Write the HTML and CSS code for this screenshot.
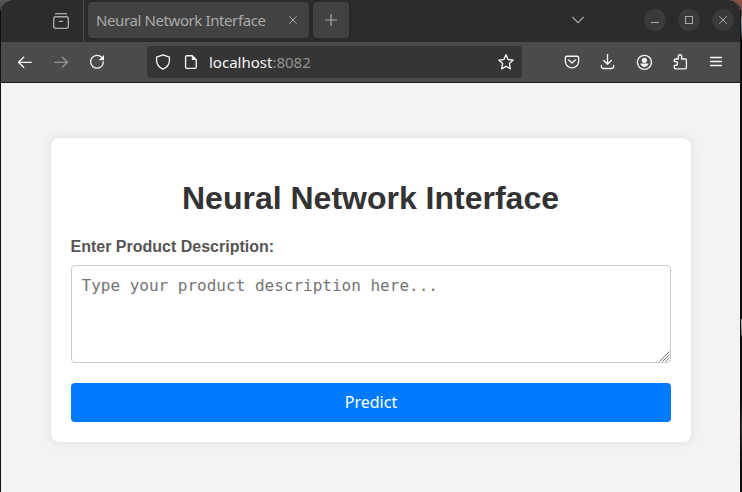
FILE: index.html
```html
<!DOCTYPE html>
<html lang="en">
<head>
<meta charset="utf-8">
<title>Neural Network Interface</title>
<link rel="stylesheet" href="styles.css">
</head>
<body>
<div class="window">
  <header class="titlebar">
    <div class="history"><svg class="icon" viewBox="0 0 16 16"><path d="M2.7 1Q3 .6 4 .6h8q1 0 1.3.4"/><rect x=".7" y="3.7" width="14.6" height="11.6" rx="2"/><path d="M6.2 8.3h3.6"/></svg></div>
    <div class="tab"><span class="tab-title">Neural Network Interface</span><svg class="tab-close" viewBox="0 0 8 8"><path d="M.3.3l7.4 7.4M7.7.3L.3 7.7"/></svg></div>
    <div class="new-tab"><svg viewBox="0 0 12 12"><path d="M6 0v12M0 6h12"/></svg></div>
    <svg class="chevron" viewBox="0 0 12 8"><path d="M.4 1L6 6.6 11.6 1"/></svg>
    <div class="controls">
      <span class="control"><svg viewBox="0 0 22 22"><path d="M7 13.5h8"/></svg></span>
      <span class="control"><svg viewBox="0 0 22 22"><rect x="7.5" y="7.5" width="7" height="7"/></svg></span>
      <span class="control"><svg viewBox="0 0 22 22"><path d="M7.2 7.2l7.6 7.6M14.8 7.2l-7.6 7.6"/></svg></span>
    </div>
  </header>
  <nav class="toolbar">
    <span class="tool"><svg class="icon" viewBox="0 0 16 16"><path d="M14.3 8.3H1.5M6.7 3.3L1.5 8.3l5.2 5"/></svg></span>
    <span class="tool disabled"><svg class="icon" viewBox="0 0 16 16"><path d="M1.7 8.3h12.8M9.3 3.3l5.2 5-5.2 5"/></svg></span>
    <span class="tool"><svg class="icon" viewBox="0 0 16 16"><path d="M12.8 3.5A6.4 6.4 0 1 0 14.4 8"/><path class="solid" d="M15 1v5.3H9.7z"/></svg></span>
    <div class="address">
      <svg class="icon" viewBox="0 0 16 16"><path d="M8 .8L14.4 3.1v3.4c0 3.7-2.5 7-6.4 8.7-3.9-1.7-6.4-5-6.4-8.7V3.1z"/></svg>
      <svg class="icon page-icon" viewBox="0 0 16 16"><path d="M3.8 1.7h5.4l4 4v7.4q0 1.2-1.2 1.2H3.8q-1.2 0-1.2-1.2V2.9q0-1.2 1.2-1.2z"/><path class="solid" d="M8.8 1.2V6h4.8z"/></svg>
      <span class="url">localhost<span class="port">:8082</span></span>
      <svg class="icon star" viewBox="0 0 16 16"><path d="M8 .8l2.1 4.7 5.1.6-3.8 3.5 1 5.2L8 12.3l-4.4 2.5 1-5.2L.8 6.1l5.1-.6z"/></svg>
    </div>
    <div class="actions">
      <span class="tool"><svg class="icon" viewBox="0 0 16 16"><path d="M3 2.2h10q1.6 0 1.6 1.6v3.8a6.6 6.2 0 0 1-13.2 0V3.8Q1.4 2.2 3 2.2zM4.7 6L8 9.1 11.3 6"/></svg></span>
      <span class="tool"><svg class="icon" viewBox="0 0 16 16"><path d="M7.5.3v10M3.7 6.5l3.8 3.8 3.8-3.8M1.4 11.5v1.3q0 1.7 1.7 1.7h8.8q1.7 0 1.7-1.7v-1.3"/></svg></span>
      <span class="tool"><svg class="icon" viewBox="0 0 16 16"><circle cx="8.4" cy="8.3" r="7"/><circle class="solid" cx="8.4" cy="6.3" r="2.6"/><path class="solid" d="M4.2 9.6h8.4Q11.4 13 8.4 13T4.2 9.6z"/></svg></span>
      <span class="tool"><svg class="icon" viewBox="0 0 16 16"><path d="M2.3 7.5V6q0-1 1-1h3V2.4a1.7 1.7 0 0 1 3.4 0V5h3.4q1.3 0 1.3 1.3v7.2q0 1.4-1.3 1.4H3.6q-1.3 0-1.3-1.4v-2.1h1.2a1.8 1.8 0 0 0 0-3.9H2.3z"/></svg></span>
      <span class="tool"><svg class="icon" viewBox="0 0 16 16"><path d="M2.5 3.5h11M2.5 7.5h11M2.5 11.5h11"/></svg></span>
    </div>
  </nav>
  <main class="page">
    <form class="card">
      <h1>Neural Network Interface</h1>
      <label for="description">Enter Product Description:</label>
      <div class="field">
        <textarea id="description" placeholder="Type your product description here..."></textarea>
        <svg class="grip" viewBox="0 0 11 11"><path d="M.5 10.5l10-10M3.5 10.5l7-7M6.5 10.5l4-4M9.5 10.5l1-1"/></svg>
      </div>
      <button type="button">Predict</button>
    </form>
  </main>
</div>
</body>
</html>
```

FILE: styles.css
```css
* { box-sizing: border-box; }
body {
  margin: 0;
  height: 492px;
  overflow: hidden;
  background:
    linear-gradient(#555, #555) 0 0 / 20px 14px no-repeat,
    linear-gradient(#8a5140 0, #75483a 14px, #a0a9b8 20px, #47597b 34px, #050505 40px, #050505 318px, #b8b8b8 320px, #777 334px, #050505 337px, #050505 400px, #353e3d 425px, #050505 465px);
  font-family: "Liberation Sans", sans-serif;
}
.window {
  width: 741px;
  height: 492px;
  border: solid #111;
  border-width: 0 1px;
  border-radius: 12px 12px 0 0;
  background: #f3f3f3;
  overflow: hidden;
}
svg { display: block; fill: none; stroke: currentColor; flex: none; }
.icon { width: 16px; height: 16px; stroke-width: 1.35; stroke-linecap: round; stroke-linejoin: round; }
.solid { fill: currentColor; stroke: none; }

.titlebar {
  display: flex;
  height: 42px;
  padding-right: 6px;
  background: #2c2c2c;
  color: #aaa;
}
.history {
  display: flex;
  align-items: center;
  width: 83px;
  padding-left: 52px;
  padding-bottom: 1px;
  border-right: 1px solid #4b4b4b;
}
.tab, .new-tab {
  display: flex;
  align-items: center;
  height: 36px;
  margin: 2px 0 0 4px;
  border-radius: 4px;
  background: #424242;
  box-shadow: 0 0 2px #202020;
}
.tab { width: 221px; padding: 0 12px 0 8px; justify-content: space-between; }
.tab-title {
  font: 15px/20px "Noto Sans", sans-serif;
  letter-spacing: -.4px;
  white-space: nowrap;
}
.tab-close { width: 8px; height: 8px; }
.new-tab { width: 36px; justify-content: center; }
.new-tab svg { width: 12px; height: 12px; stroke-width: 1.2; }
.chevron { width: 12px; height: 8px; margin: 16px 0 0 auto; stroke-width: 1.2; }
.controls { display: flex; gap: 12px; margin: 9px 0 0 60px; }
.control { width: 22px; height: 22px; border-radius: 50%; background: #3a3a3a; }

.toolbar {
  display: flex;
  align-items: center;
  height: 41px;
  padding: 0 6px;
  border-bottom: 1px solid #181818;
  background: #4b4b4b;
  color: #f5f5f5;
}
.tool { display: flex; justify-content: center; width: 36px; }
.disabled { color: #939393; }
.address {
  display: flex;
  align-items: center;
  width: 375px;
  height: 32px;
  margin-left: 32px;
  padding: 0 8px;
  border-radius: 4px;
  background: #353535;
}
.page-icon { margin-left: 12px; }
.url { margin-left: 10px; font: 15px/20px "Noto Sans", sans-serif; letter-spacing: 0; }
.port { color: #929292; }
.star { margin-left: auto; }
.actions { display: flex; margin-left: auto; }

.page { padding: 55px 49px 0 50px; }
.card {
  width: 640px;
  height: 304px;
  padding: 20px;
  border-radius: 8px;
  background: #fff;
  box-shadow: 0 0 10px rgba(0, 0, 0, .1);
}
h1 {
  margin: 22px 1px 20px 0;
  color: #333;
  font-size: 32px;
  line-height: 36px;
  text-align: center;
}
label {
  display: block;
  margin: 0 0 8px -.5px;
  color: #555;
  font-size: 16px;
  font-weight: bold;
  line-height: 21px;
}
.field { position: relative; height: 98px; margin-bottom: 20px; }
textarea {
  display: block;
  width: 600px;
  height: 98px;
  padding: 10px 10px 10px 9.5px;
  border: 1px solid #ccc;
  border-radius: 4px;
  background: #fff;
  font: 16px/19px "DejaVu Sans Mono", monospace;
  resize: none;
}
textarea::placeholder { color: #757575; opacity: 1; }
.grip {
  position: absolute;
  right: 1px;
  bottom: 1px;
  width: 11px;
  height: 11px;
  color: #777;
  background: #fff;
}
button {
  display: block;
  width: 600px;
  height: 39px;
  padding: 0;
  border: 0;
  border-radius: 4px;
  background: #007bff;
  color: #fff;
  font: 16px/39px "Noto Sans", sans-serif;
  letter-spacing: 0;
}
```
